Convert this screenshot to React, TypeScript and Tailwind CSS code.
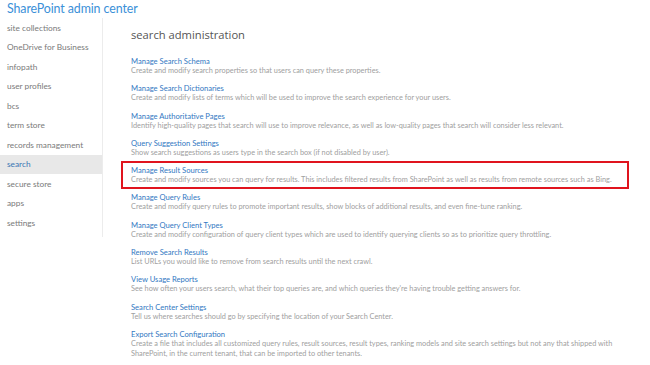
const navItems = [
  "site collections",
  "OneDrive for Business",
  "infopath",
  "user profiles",
  "bcs",
  "term store",
  "records management",
  "search",
  "secure store",
  "apps",
  "settings",
];

const entries = [
  {
    title: "Manage Search Schema",
    text: "Create and modify search properties so that users can query these properties.",
  },
  {
    title: "Manage Search Dictionaries",
    text: "Create and modify lists of terms which will be used to improve the search experience for your users.",
  },
  {
    title: "Manage Authoritative Pages",
    text: "Identify high-quality pages that search will use to improve relevance, as well as low-quality pages that search will consider less relevant.",
  },
  {
    title: "Query Suggestion Settings",
    text: "Show search suggestions as users type in the search box (if not disabled by user).",
  },
  {
    title: "Manage Result Sources",
    text: "Create and modify sources you can query for results. This includes filtered results from SharePoint as well as results from remote sources such as Bing.",
    marked: true,
  },
  {
    title: "Manage Query Rules",
    text: "Create and modify query rules to promote important results, show blocks of additional results, and even fine-tune ranking.",
  },
  {
    title: "Manage Query Client Types",
    text: "Create and modify configuration of query client types which are used to identify querying clients so as to prioritize query throttling.",
  },
  {
    title: "Remove Search Results",
    text: "List URLs you would like to remove from search results until the next crawl.",
  },
  {
    title: "View Usage Reports",
    text: "See how often your users search, what their top queries are, and which queries they're having trouble getting answers for.",
  },
  {
    title: "Search Center Settings",
    text: "Tell us where searches should go by specifying the location of your Search Center.",
  },
  {
    title: "Export Search Configuration",
    text: "Create a file that includes all customized query rules, result sources, result types, ranking models and site search settings but not any that shipped with SharePoint, in the current tenant, that can be imported to other tenants.",
  },
];

export default function App() {
  return (
    <div className="w-[650px] h-[365px] overflow-hidden bg-white font-['Lato',sans-serif]">
      {/* header */}
      <div className="h-[18px] pl-[7px] text-[12.4px] leading-[18px] tracking-[-0.1px] text-[#3b90d8]">
        SharePoint admin center
      </div>

      <div className="flex">
        {/* left nav */}
        <div className="w-[103px] shrink-0 border-r border-[#ececec] pb-[4px] self-start">
          {navItems.map((item) => (
            <div
              key={item}
              className={
                item === "search"
                  ? "h-[19.5px] flex items-center pl-[7px] text-[8.3px] text-[#3a77b4] bg-[#e8e8e8]"
                  : "h-[19.5px] flex items-center pl-[7px] text-[8.3px] text-[#7a7a7a]"
              }
            >
              {item}
            </div>
          ))}
        </div>

        {/* main */}
        <div className="pl-[28px] pt-[7px] w-[530px]">
          <h1 className="text-[11.2px] leading-[20px] text-[#555] font-['Open_Sans',sans-serif] mb-[11px]">
            search administration
          </h1>
          <div className="flex flex-col gap-[7.3px] w-[500px]">
            {entries.map((e) => (
              <div key={e.title} className="relative">
                <div className="text-[7.6px] leading-[10px] text-[#3278c2]">{e.title}</div>
                <div className="text-[7.35px] leading-[10px] text-[#a0a0a0]">{e.text}</div>
                {e.marked && (
                  <span className="absolute -left-[10px] -top-[4px] w-[508px] h-[28px] border-2 border-[#e0141e]" />
                )}
              </div>
            ))}
          </div>
        </div>
      </div>
    </div>
  );
}
